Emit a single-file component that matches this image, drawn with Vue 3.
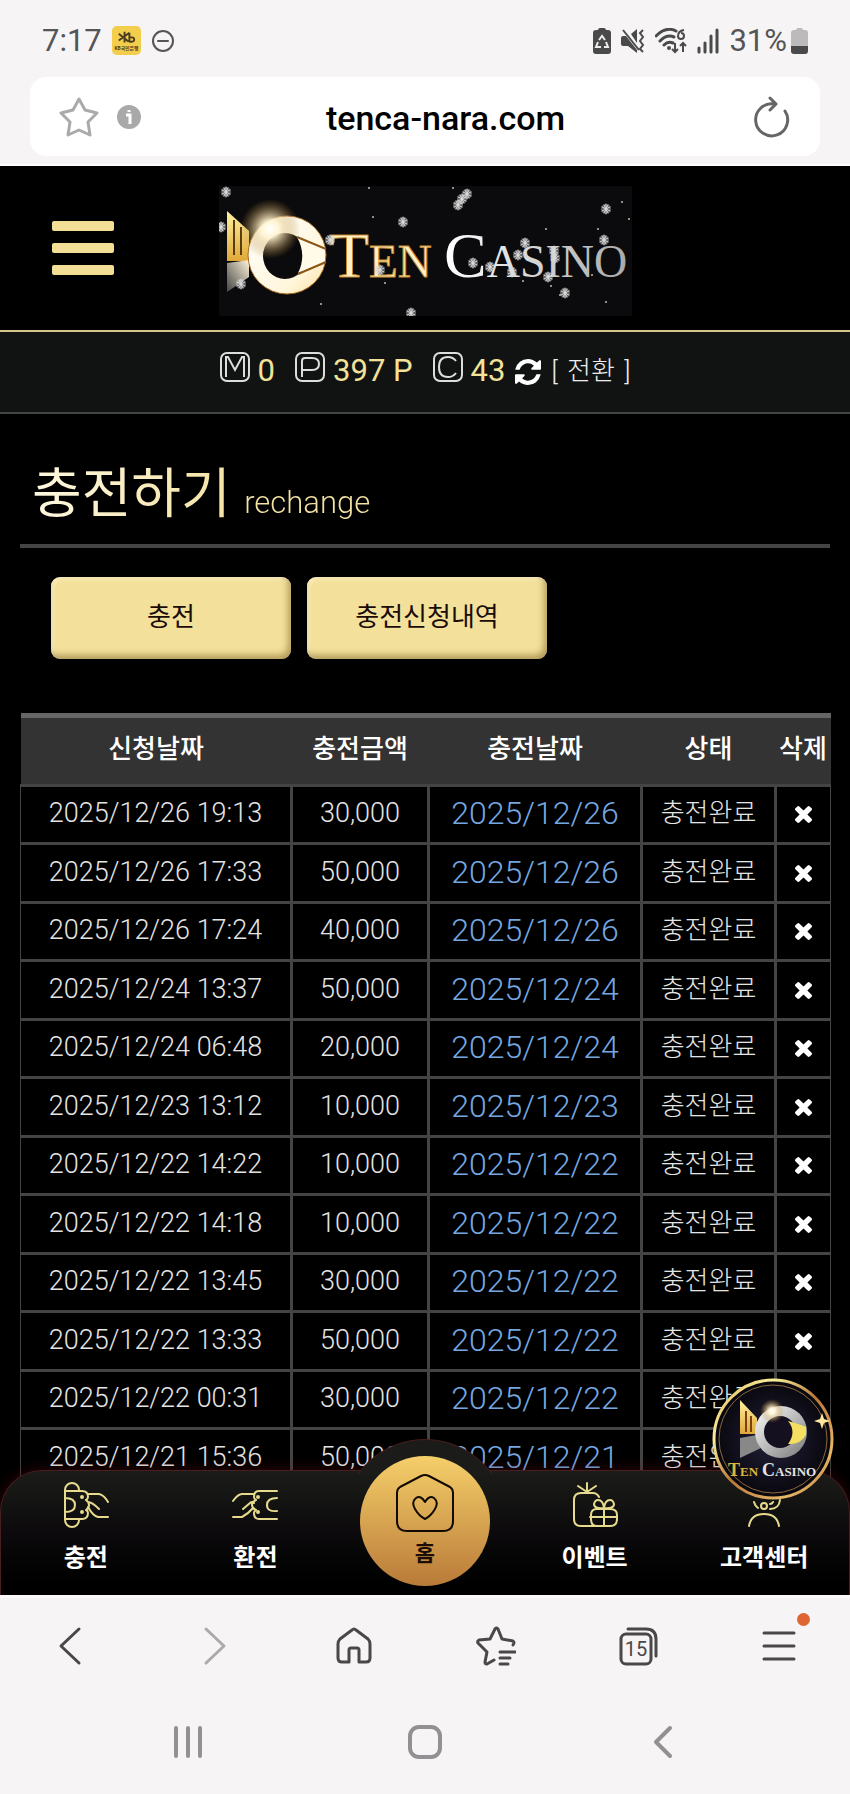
<template>
  <div class="phone">
    <header class="chrome-top">
      <div class="status-bar">
        <time class="clock">7:17</time>
        <svg class="kb" viewBox="0 0 30 30" aria-hidden="true">
          <rect width="30" height="30" rx="5" fill="#f3cd4c" />
          <path d="M7 8l10 8M13 6v11M7 15l11-8M18 7v9q5 1 5-2t-5-2" fill="none" stroke="#4a3c20" stroke-width="2" />
          <text x="15" y="25" text-anchor="middle" font-size="5" font-weight="700" fill="#4a3c20">KB국민은행</text>
        </svg>
        <svg class="dnd" viewBox="0 0 24 24" aria-hidden="true">
          <circle cx="12" cy="12" r="10" fill="none" stroke="#555" stroke-width="2" />
          <path d="M7 12h10" stroke="#555" stroke-width="2" stroke-linecap="round" />
        </svg>
        <div class="status-right">
          <svg width="18" height="26" viewBox="0 0 18 26" aria-hidden="true">
            <path d="M5 2q0-2 2-2h4q2 0 2 2h2q3 0 3 3v18q0 3-3 3H3q-3 0-3-3V5q0-3 3-3z" fill="#4a4a4a" />
            <path d="M6 12l3-4 3 4M13 14l2 5h-4M8 19H3l2-5" fill="none" stroke="#eee" stroke-width="2" />
          </svg>
          <svg width="24" height="26" viewBox="0 0 24 26" aria-hidden="true">
            <path d="M0 10q0-2 2-2h3L16 22v3L7 18H2q-2 0-2-2zM10 6l6-5v14z" fill="#4a4a4a" />
            <path d="M2 2l16 20" stroke="#4a4a4a" stroke-width="2" />
            <path d="M22 2l-3 3 3 4-3 4 3 4-3 4 3 3" fill="none" stroke="#4a4a4a" stroke-width="2" />
          </svg>
          <svg width="32" height="26" viewBox="0 0 32 26" aria-hidden="true">
            <path d="M1 8Q11-2 21 3M5 13q7-7 14-4M9 17q4-4 9-2" fill="none" stroke="#4a4a4a" stroke-width="3" stroke-linecap="round" />
            <circle cx="14" cy="20" r="2" fill="#4a4a4a" />
            <path d="M29 2q-6 1-6 6a3 3 0 1 0 3-3M20 15v9m-3-3l3 3 3-3M28 24v-9m-3 3l3-3 3 3" fill="none" stroke="#4a4a4a" stroke-width="2" />
          </svg>
          <svg width="22" height="26" viewBox="0 0 22 26" aria-hidden="true">
            <path d="M2 20v4M8 15v9M14 8v16M20 2v22" stroke="#4a4a4a" stroke-width="3" stroke-linecap="round" />
          </svg>
          <span class="percent">31%</span>
          <svg width="17" height="26" viewBox="0 0 17 26" aria-hidden="true">
            <path d="M5 2q0-2 2-2h3q2 0 2 2h2q3 0 3 3v13H0V5q0-3 3-3z" fill="#bbb" />
            <path d="M0 18h17v5q0 3-3 3H3q-3 0-3-3z" fill="#4a4a4a" />
          </svg>
        </div>
      </div>
      <div class="url-bar">
        <button class="plain" aria-label="북마크">
          <svg width="40" height="40" viewBox="0 0 40 40">
            <path d="M20 2l6 11 12 3-9 9 2 13-11-5-11 5 2-13-9-9 12-3z" fill="none" stroke="#aaa" stroke-width="3" stroke-linejoin="round" />
          </svg>
        </button>
        <button class="plain info" aria-label="사이트 정보">
          <svg width="24" height="24" viewBox="0 0 24 24">
            <circle cx="12" cy="12" r="12" fill="#a9a9a9" />
            <path d="M9 10h4v9M12 5v2" fill="none" stroke="#fff" stroke-width="3" />
          </svg>
        </button>
        <input v-model="address" type="text" aria-label="주소">
        <button class="plain" aria-label="새로고침">
          <svg width="36" height="42" viewBox="0 0 36 42">
            <path d="M31 15A16 16 0 1 1 20 8M16 2l6 6-6 6" fill="none" stroke="#666" stroke-width="3" stroke-linecap="round" stroke-linejoin="round" />
          </svg>
        </button>
      </div>
    </header>

    <main class="site">
      <div class="site-header">
        <button class="burger" aria-label="메뉴"><i></i><i></i><i></i></button>
        <svg class="logo" viewBox="0 0 413 130" role="img" aria-label="Ten Casino">
          <defs>
            <linearGradient id="goldPanel" x2="0" y2="1">
              <stop offset="0" stop-color="#fff3a0" /><stop offset="1" stop-color="#e0a838" />
            </linearGradient>
            <linearGradient id="greyPanel" x1="1" x2="0" y2="1">
              <stop offset="0" stop-color="#fff4d8" /><stop offset="1" stop-color="#444" />
            </linearGradient>
            <linearGradient id="ring" y2="1">
              <stop offset="0" stop-color="#fff" /><stop offset=".7" stop-color="#fff6dc" /><stop offset="1" stop-color="#fbe0a0" />
            </linearGradient>
            <radialGradient id="flare">
              <stop offset="0" stop-color="#fff" /><stop offset=".3" stop-color="#fff4d0" stop-opacity=".9" /><stop offset="1" stop-color="#b08030" stop-opacity="0" />
            </radialGradient>
            <linearGradient id="silver">
              <stop offset="0" stop-color="#fff" /><stop offset="1" stop-color="#aaa" />
            </linearGradient>
            <g id="flake">
              <circle r="5" fill="#ccc" opacity=".45" />
              <path d="M0-5V5M-4-2L4 2M-4 2L4-2M-2-4L2 4M2-4L-2 4" stroke="#ddd" stroke-linecap="round" />
            </g>
          </defs>
          <rect width="413" height="130" fill="#0b0a0c" />
          <path d="M8 25l22 20v30H8z" fill="url(#goldPanel)" />
          <path d="M15 34v35M22 41v28" stroke="#5a3c10" stroke-width="2" />
          <path d="M8 77l22-3v17L8 106z" fill="url(#greyPanel)" />
          <circle cx="68" cy="69" r="39" fill="url(#ring)" stroke="#a86c20" />
          <ellipse cx="66" cy="70" rx="22" ry="23" fill="#0b0a0c" />
          <path d="M78 51q10 18 1 36l27-12V61z" fill="#fffbe8" />
          <path d="M78 51l29 12M79 88l28-12" stroke="#8a5618" stroke-width="2" />
          <circle cx="51" cy="43" r="30" fill="url(#flare)" />
          <g class="ten">
            <text x="111" y="91" font-size="64">T<tspan font-size="47">EN</tspan></text>
          </g>
          <g class="casino">
            <text x="225" y="91" font-size="64">C<tspan font-size="46">ASINO</tspan></text>
          </g>
          <use v-for="(f, i) in flakes" :key="i" href="#flake" :transform="`translate(${f[0]} ${f[1]})`" />
          <circle v-for="(d, i) in dust" :key="'d' + i" :cx="d[0]" :cy="d[1]" r="1" fill="#bbb" />
        </svg>
      </div>

      <div class="wallet">
        <span class="money">
          <svg width="30" height="30" viewBox="0 0 30 30" aria-label="M"><rect x="1" y="1" width="28" height="28" rx="6" /><path d="M6 25V5h2l7 13 7-13h2v20" /></svg>
          0
        </span>
        <span class="money">
          <svg width="30" height="30" viewBox="0 0 30 30" aria-label="P"><rect x="1" y="1" width="28" height="28" rx="6" /><path d="M7 25V9q0-3 3-3h7q7 0 7 6t-7 6H7" /></svg>
          397 P
        </span>
        <span class="money">
          <svg width="30" height="30" viewBox="0 0 30 30" aria-label="C"><rect x="1" y="1" width="28" height="28" rx="6" /><path d="M23 9q-3-4-8-4-9 0-9 10t9 10q5 0 8-4" /></svg>
          43
        </span>
        <button class="plain convert">
          <svg width="26" height="26" viewBox="0 0 1536 1536" aria-hidden="true">
            <path fill="#fff" d="M1511 928q0 5-1 7-64 268-268 434.500t-478 166.500q-146 0-282.500-55t-243.500-157l-129 129q-19 19-45 19t-45-19-19-45v-448q0-26 19-45t45-19h448q26 0 45 19t19 45-19 45l-137 137q71 66 161 102t187 36q134 0 250-65t186-179q11-17 53-117 8-23 30-23h192q13 0 22.500 9.500t9.500 22.500zm25-800v448q0 26-19 45t-45 19h-448q-26 0-45-19t-19-45 19-45l138-138q-148-137-349-137-134 0-250 65t-186 179q-11 17-53 117-8 23-30 23h-199q-13 0-22.500-9.500t-9.500-22.500v-7q65-268 270-434.500t480-166.500q146 0 284 55.500t245 156.500l130-129q19-19 45-19t45 19 19 45z" />
          </svg>
          <span class="convert-text">[ <span class="convert-label">전환</span> ]</span>
        </button>
      </div>

      <section class="content">
        <h1>충전하기 <small>rechange</small></h1>
        <div class="tabs">
          <button v-for="tab in tabs" :key="tab">{{ tab }}</button>
        </div>
        <table>
          <colgroup>
            <col class="c-request"><col class="c-amount"><col class="c-date"><col class="c-state"><col class="c-delete">
          </colgroup>
          <thead>
            <tr><th v-for="h in heads" :key="h">{{ h }}</th></tr>
          </thead>
          <tbody>
            <tr v-for="row in rows" :key="row.at">
              <td>{{ row.at }}</td>
              <td>{{ row.amount }}</td>
              <td class="done">{{ row.at.slice(0, 10) }}</td>
              <td class="state">충전완료</td>
              <td>
                <button class="plain remove" aria-label="삭제">
                  <svg width="17" height="17" viewBox="110 258 1188 1188">
                    <path fill="#fff" d="M1298 1214q0 40-28 68l-136 136q-28 28-68 28t-68-28l-294-294-294 294q-28 28-68 28t-68-28l-136-136q-28-28-28-68t28-68l294-294-294-294q-28-28-28-68t28-68l136-136q28-28 68-28t68 28l294 294 294-294q28-28 68-28t68 28l136 136q28 28 28 68t-28 68l-294 294 294 294q28 28 28 68z" />
                  </svg>
                </button>
              </td>
            </tr>
          </tbody>
        </table>
      </section>

      <nav class="dock">
        <a href="#">
          <svg width="46" height="46" viewBox="0 0 46 46">
            <path d="M2 38V8a7 7 0 0 1 14 0v1M2 38a7 7 0 0 0 14 0v-1M2 9h17q6 0 6 6 0 2-2 3 3 2 3 5t-3 5q2 1 2 3 0 6-6 6H2M2 16q10 0 10 7T2 30M25 12h11q5 1 9 8M25 20q4 0 11 7M25 25q5 9 10 10h10" />
            <circle cx="19" cy="15" r="2" /><circle cx="19" cy="30" r="2" />
          </svg>
          충전
        </a>
        <a href="#">
          <svg width="46" height="46" viewBox="0 0 46 46">
            <path d="M45 9H27q-5 0-5 6 0 2 2 3-4 2-4 5t4 5q-2 1-2 3 0 6 5 6h18M45 16q-10 0-10 7t10 6M1 19q5-7 9-7h11M1 35h9q6-3 11-9M11 27l7-6q2-2 4 0" />
            <circle cx="26" cy="15" r="2" /><circle cx="26" cy="30" r="2" />
          </svg>
          환전
        </a>
        <a href="#" class="home">
          <svg width="60" height="60" viewBox="0 0 60 60">
            <path d="M2 20q0-4 3-6L26 3q4-2 8 0l21 11q3 2 3 6v28q0 10-10 10H12Q2 58 2 48zM30 29q-4-7-9-4-5 4-1 11 4 7 10 10 6-3 10-10 4-7-1-11-5-3-9 4z" />
          </svg>
          홈
        </a>
        <a href="#">
          <svg width="46" height="46" viewBox="0 0 46 46">
            <path d="M27 15q-2-4-6-4H9q-7 0-7 7v19q0 7 7 7h29q7 0 7-7v-4q0-6-7-6H25q-6 0-6 6v4q0 7 6 7M32 25v19M18 35h27M15 1v9M6 4l9 6 9-6M32 26q-10 1-10-4 1-4 4-4 5 0 6 8 1-8 6-8 3 0 4 4 0 5-10 4" />
          </svg>
          이벤트
        </a>
        <a href="#">
          <svg width="46" height="46" viewBox="0 0 46 46">
            <path d="M8 44q2-12 15-12t15 12M13 20q1 4 4 6M39 18q-1 9-10 9M32 20q-1 2-3 2" />
            <circle class="ring" cx="23" cy="24" r="3" />
          </svg>
          고객센터
        </a>
      </nav>

      <a href="#" class="badge" aria-label="Ten Casino">
        <svg viewBox="0 0 122 122">
          <defs>
            <radialGradient id="night"><stop offset="0" stop-color="#22203a" /><stop offset="1" stop-color="#08070c" /></radialGradient>
            <linearGradient id="rim" x2="1" y2="1">
              <stop offset="0" stop-color="#e0b04c" /><stop offset=".25" stop-color="#f8ee9c" /><stop offset=".5" stop-color="#b87838" /><stop offset=".8" stop-color="#e8b868" /><stop offset="1" stop-color="#a86830" />
            </linearGradient>
            <linearGradient id="steel" x2="1" y2="1"><stop offset="0" stop-color="#fff" /><stop offset="1" stop-color="#777" /></linearGradient>
          </defs>
          <circle cx="61" cy="61" r="59" fill="url(#night)" stroke="url(#rim)" stroke-width="3" />
          <circle cx="61" cy="61" r="54" fill="none" stroke="#8a6840" />
          <path d="M28 22l17 18v16H28z" fill="url(#goldPanel)" />
          <path d="M34 33v21M39 38v16" stroke="#7a4010" stroke-width="2" />
          <path d="M28 80V60l17-3q0 9 4 13z" fill="#888" />
          <circle cx="69" cy="54" r="26" fill="url(#steel)" />
          <circle cx="68" cy="54" r="16" fill="#141020" />
          <path d="M76 43q9 11 0 23 12 1 18-9V49q-7-3-18-6z" fill="#f5df62" />
          <circle cx="60" cy="33" r="12" fill="url(#flare)" />
          <path d="M110 35l2 6 6 2-6 2-2 6-2-6-6-2 6-2z" fill="#ffe7a0" />
          <text x="16" y="98" font-size="18" font-weight="700" fill="#dfb53c">T<tspan font-size="13">EN</tspan></text>
          <text x="50" y="98" font-size="18" font-weight="700" fill="#e4e4e4">C<tspan font-size="13">ASINO</tspan></text>
        </svg>
      </a>
    </main>

    <footer class="chrome-bottom">
      <div class="tools">
        <button class="plain" aria-label="뒤로"><svg width="40" height="40" viewBox="0 0 40 40"><path d="M28 3L10 20l18 17" /></svg></button>
        <button class="plain dim" aria-label="앞으로"><svg width="40" height="40" viewBox="0 0 40 40"><path d="M13 3l18 17-18 17" /></svg></button>
        <button class="plain" aria-label="홈"><svg width="40" height="40" viewBox="0 0 40 40"><path d="M15 36H8q-4 0-4-4V18q0-3 2-5L18 4q2-2 4 0l12 9q2 2 2 5v14q0 4-4 4h-7V24q0-2-2-2h-6q-2 0-2 2z" /></svg></button>
        <button class="plain" aria-label="북마크 목록"><svg width="40" height="40" viewBox="0 0 40 40"><path d="M18 34l-7 4q-2 0-2-2l2-10-9-9q-1-2 1-3l11-1 5-10q1-2 3 0l4 10 11 2q2 1 0 4M24 26h15M24 32h10M24 38h8" /></svg></button>
        <button class="plain" aria-label="탭 15개">
          <svg width="40" height="40" viewBox="0 0 40 40"><rect x="3" y="8" width="30" height="30" rx="5" /><path d="M10 3h18q10 0 10 10v17" /><text x="18" y="30" text-anchor="middle" font-size="20">15</text></svg>
        </button>
        <button class="plain" aria-label="메뉴"><svg width="40" height="40" viewBox="0 0 40 40"><path d="M5 7h30M5 20h30M5 33h30" /></svg><i class="dot"></i></button>
      </div>
      <div class="system">
        <button class="plain" aria-label="최근 앱"><svg width="36" height="36" viewBox="0 0 36 36"><path d="M6 4v28M18 4v28M30 4v28" /></svg></button>
        <button class="plain" aria-label="홈 화면"><svg width="36" height="36" viewBox="0 0 36 36"><rect x="3" y="3" width="30" height="30" rx="9" /></svg></button>
        <button class="plain" aria-label="뒤로 가기"><svg width="36" height="36" viewBox="0 0 36 36"><path d="M26 4L12 18l14 14" /></svg></button>
      </div>
    </footer>
  </div>
</template>

<script setup>
import { ref } from 'vue';

const address = ref('tenca-nara.com');

const tabs = ['충전', '충전신청내역'];
const heads = ['신청날짜', '충전금액', '충전날짜', '상태', '삭제'];

const rows = [
  { at: '2025/12/26 19:13', amount: '30,000' },
  { at: '2025/12/26 17:33', amount: '50,000' },
  { at: '2025/12/26 17:24', amount: '40,000' },
  { at: '2025/12/24 13:37', amount: '50,000' },
  { at: '2025/12/24 06:48', amount: '20,000' },
  { at: '2025/12/23 13:12', amount: '10,000' },
  { at: '2025/12/22 14:22', amount: '10,000' },
  { at: '2025/12/22 14:18', amount: '10,000' },
  { at: '2025/12/22 13:45', amount: '30,000' },
  { at: '2025/12/22 13:33', amount: '50,000' },
  { at: '2025/12/22 00:31', amount: '30,000' },
  { at: '2025/12/21 15:36', amount: '50,000' },
];

// 로고 위에 날리는 눈송이 좌표
const flakes = [
  [7, 6], [2, 41], [184, 36], [192, 127], [111, 54], [161, 84], [22, 98],
  [248, 8], [243, 13], [239, 19], [387, 23], [306, 57], [299, 69], [254, 77],
  [271, 81], [293, 86], [335, 65], [336, 72], [329, 91], [346, 107], [385, 54],
];
const dust = [
  [150, 2], [154, 31], [102, 118], [166, 97], [234, 2], [327, 43], [379, 43],
  [403, 16], [410, 33], [304, 95], [332, 100], [387, 116], [373, 89], [341, 109],
];
</script>

<style>
body {
  background: #f6f4f5;
}
</style>

<style scoped>
.phone {
  display: flex;
  flex-direction: column;
  height: 100vh;
  overflow: hidden;
  background: #f6f4f5;
  font-family: Roboto, "Noto Sans CJK KR", sans-serif;
}

.phone * {
  box-sizing: border-box;
}

svg {
  display: block;
  flex: none;
}

.plain {
  display: flex;
  align-items: center;
  justify-content: center;
  padding: 0;
  border: none;
  background: none;
  font: inherit;
  color: inherit;
  cursor: pointer;
}

/* 상단 브라우저 영역 */
.chrome-top {
  padding-bottom: 8px;
  border-bottom: 2px solid #fff;
}

.status-bar {
  display: flex;
  align-items: center;
  height: 77px;
  padding: 4px 42px 0;
  font-size: 31px;
  color: #555;
}

.kb {
  width: 29px;
  height: 29px;
  margin-left: 10px;
}

.dnd {
  width: 24px;
  height: 24px;
  margin-left: 10px;
}

.status-right {
  display: flex;
  align-items: center;
  gap: 10px;
  margin-left: auto;
}

.percent {
  margin-right: -6px;
}

.url-bar {
  display: flex;
  align-items: center;
  height: 79px;
  margin: 0 30px;
  padding: 0 30px 0 29px;
  border-radius: 16px;
  background: #fff;
}

.info {
  margin-left: 18px;
}

.url-bar input {
  flex: 1;
  min-width: 0;
  padding: 2px 4px 0 0;
  border: none;
  outline: none;
  background: none;
  text-align: center;
  font-family: inherit;
  font-size: 34px;
  font-weight: 500;
  color: #000;
}

/* 사이트 */
.site {
  position: relative;
  flex: 1;
  min-height: 0;
  overflow: hidden;
  background: #000;
  color: #fff;
}

.site-header {
  display: grid;
  grid-template-columns: 1fr auto 1fr;
  align-items: center;
  height: 166px;
  padding: 0 52px;
  border-bottom: 2px solid #d8c48a;
}

.burger {
  display: flex;
  flex-direction: column;
  gap: 12px;
  width: 62px;
  padding: 0;
  border: none;
  background: none;
}

.burger i {
  height: 10px;
  border-radius: 2px;
  background: #f3de95;
}

.logo {
  width: 413px;
  height: 130px;
  margin-top: 6px;
  overflow: hidden;
}

.logo text,
.badge text {
  font-family: "Liberation Serif", serif;
}

.ten {
  fill: #fff0c8;
  stroke: #c98a2c;
  stroke-width: 1;
}

.casino {
  fill: url(#silver);
}

.wallet {
  display: flex;
  align-items: center;
  justify-content: center;
  gap: 20px;
  height: 82px;
  padding-bottom: 4px;
  border-bottom: 2px solid #444;
  background: #111312;
  font-size: 31px;
  color: #f2e29a;
}

.money {
  display: flex;
  align-items: center;
  gap: 8px;
}

.money svg {
  margin-bottom: 6px;
  fill: none;
  stroke: #ddd;
  stroke-width: 2;
}

.convert {
  gap: 10px;
  margin-left: -10px;
  font-size: 26px;
  font-weight: 300;
  color: #eee;
}

.convert svg {
  margin-top: 4px;
}

.convert-text {
  padding-bottom: 4px;
}

.convert-label {
  margin: 0 3px;
}

.content {
  padding: 0 20px;
}

h1 {
  margin: 0;
  padding: 42px 12px 10px;
  border-bottom: 4px solid #444;
  font-size: 54px;
  font-weight: 400;
  line-height: 78px;
  color: transparent;
  background: linear-gradient(100deg, #fffbe6 0, #f5e3a4 220px);
  -webkit-background-clip: text;
  background-clip: text;
}

h1 small {
  font-size: 31px;
  font-weight: 300;
  line-height: 1;
}

.tabs {
  display: flex;
  gap: 16px;
  padding: 29px 31px 54px;
}

.tabs button {
  width: 240px;
  height: 82px;
  padding: 0 0 8px;
  border: none;
  border-radius: 9px;
  background: #f3e09a;
  box-shadow: inset -3px -4px 6px rgba(120, 90, 30, 0.5), inset 2px 2px 5px rgba(255, 250, 220, 0.6);
  font-family: inherit;
  font-size: 26px;
  color: #1a0c08;
}

/* 충전 내역 */
table {
  width: 100%;
  table-layout: fixed;
  border-collapse: collapse;
  text-align: center;
}

.c-request { width: 271px; }
.c-amount { width: 137px; }
.c-date { width: 213px; }
.c-state { width: 134px; }
.c-delete { width: 55px; }

th {
  height: 70px;
  padding: 0 0 4px;
  border-top: 5px solid #666;
  border-bottom: 3px solid #444;
  background: #333;
  font-size: 26px;
  font-weight: 500;
  line-height: 36px;
  white-space: nowrap;
}

td {
  height: 58px;
  padding: 0 0 3px;
  border: 3px solid #444;
  font-size: 27px;
  font-weight: 300;
  line-height: 36px;
  color: #e4e4e4;
}

td:first-child {
  border-left-width: 1px;
}

td:last-child {
  border-right-width: 1px;
}

tbody tr:nth-child(even) td {
  height: 59px;
}

.done {
  font-size: 32px;
  color: #74a7e0;
}

.state {
  font-size: 26px;
}

.remove {
  width: 100%;
  padding-top: 3px;
}

/* 하단 메뉴 */
.dock {
  position: absolute;
  right: 0;
  bottom: 0;
  left: 0;
  display: flex;
  height: 125px;
  border: 1px solid #4a1d1f;
  border-bottom: none;
  border-radius: 42px 42px 0 0;
  background: linear-gradient(#1b1c19, #0c0a0c 50%, #000 90%);
  box-shadow: 0 0 14px rgba(120, 10, 20, 0.4);
}

.dock::before {
  content: '';
  position: absolute;
  top: -32px;
  left: 50%;
  width: 164px;
  height: 164px;
  border: 1px solid #4a1d1f;
  border-radius: 50%;
  background: #1b1c19;
  clip-path: inset(0 0 131px 0);
  transform: translateX(-50%);
}

.dock a {
  position: relative;
  flex: 1;
  display: flex;
  flex-direction: column;
  align-items: center;
  gap: 13px;
  padding-top: 11px;
  font-size: 24px;
  font-weight: 700;
  line-height: 34px;
  color: #fff;
  text-decoration: none;
}

.dock svg {
  fill: none;
  stroke: #e6da8c;
  stroke-width: 2;
  stroke-linecap: round;
  stroke-linejoin: round;
}

.dock circle {
  fill: #e6da8c;
  stroke: none;
}

.dock .ring {
  fill: none;
  stroke: #e6da8c;
}

.dock .home {
  z-index: 1;
  gap: 4px;
  padding-top: 2px;
  font-size: 22px;
  color: #1c0e04;
}

.dock .home::before {
  content: '';
  position: absolute;
  top: -15px;
  left: 50%;
  z-index: -1;
  width: 130px;
  height: 130px;
  border-radius: 50%;
  background: linear-gradient(#f5cf6a, #b97a38);
  transform: translateX(-50%);
}

.dock .home svg {
  stroke: #120a02;
}

.badge {
  position: absolute;
  right: 16px;
  bottom: 95px;
  z-index: 2;
  width: 122px;
}

/* 하단 브라우저 영역 */
.chrome-bottom {
  border-top: 3px solid #fcf8fa;
}

.tools,
.system {
  display: flex;
}

.tools .plain,
.system .plain {
  position: relative;
  flex: 1;
}

.tools .plain {
  height: 96px;
}

.tools svg {
  fill: none;
  stroke: #4a474a;
  stroke-width: 3;
  stroke-linecap: round;
  stroke-linejoin: round;
}

.tools text {
  fill: #4a474a;
  stroke: none;
}

.tools .dim svg {
  stroke: #aaa;
}

.dot {
  position: absolute;
  top: 15px;
  left: 50%;
  width: 13px;
  height: 13px;
  margin-left: 18px;
  border-radius: 50%;
  background: #dd6633;
}

.system {
  height: 100px;
  padding: 0 70px 4px;
}

.system svg {
  fill: none;
  stroke: #929092;
  stroke-width: 4;
  stroke-linecap: round;
  stroke-linejoin: round;
}
</style>
